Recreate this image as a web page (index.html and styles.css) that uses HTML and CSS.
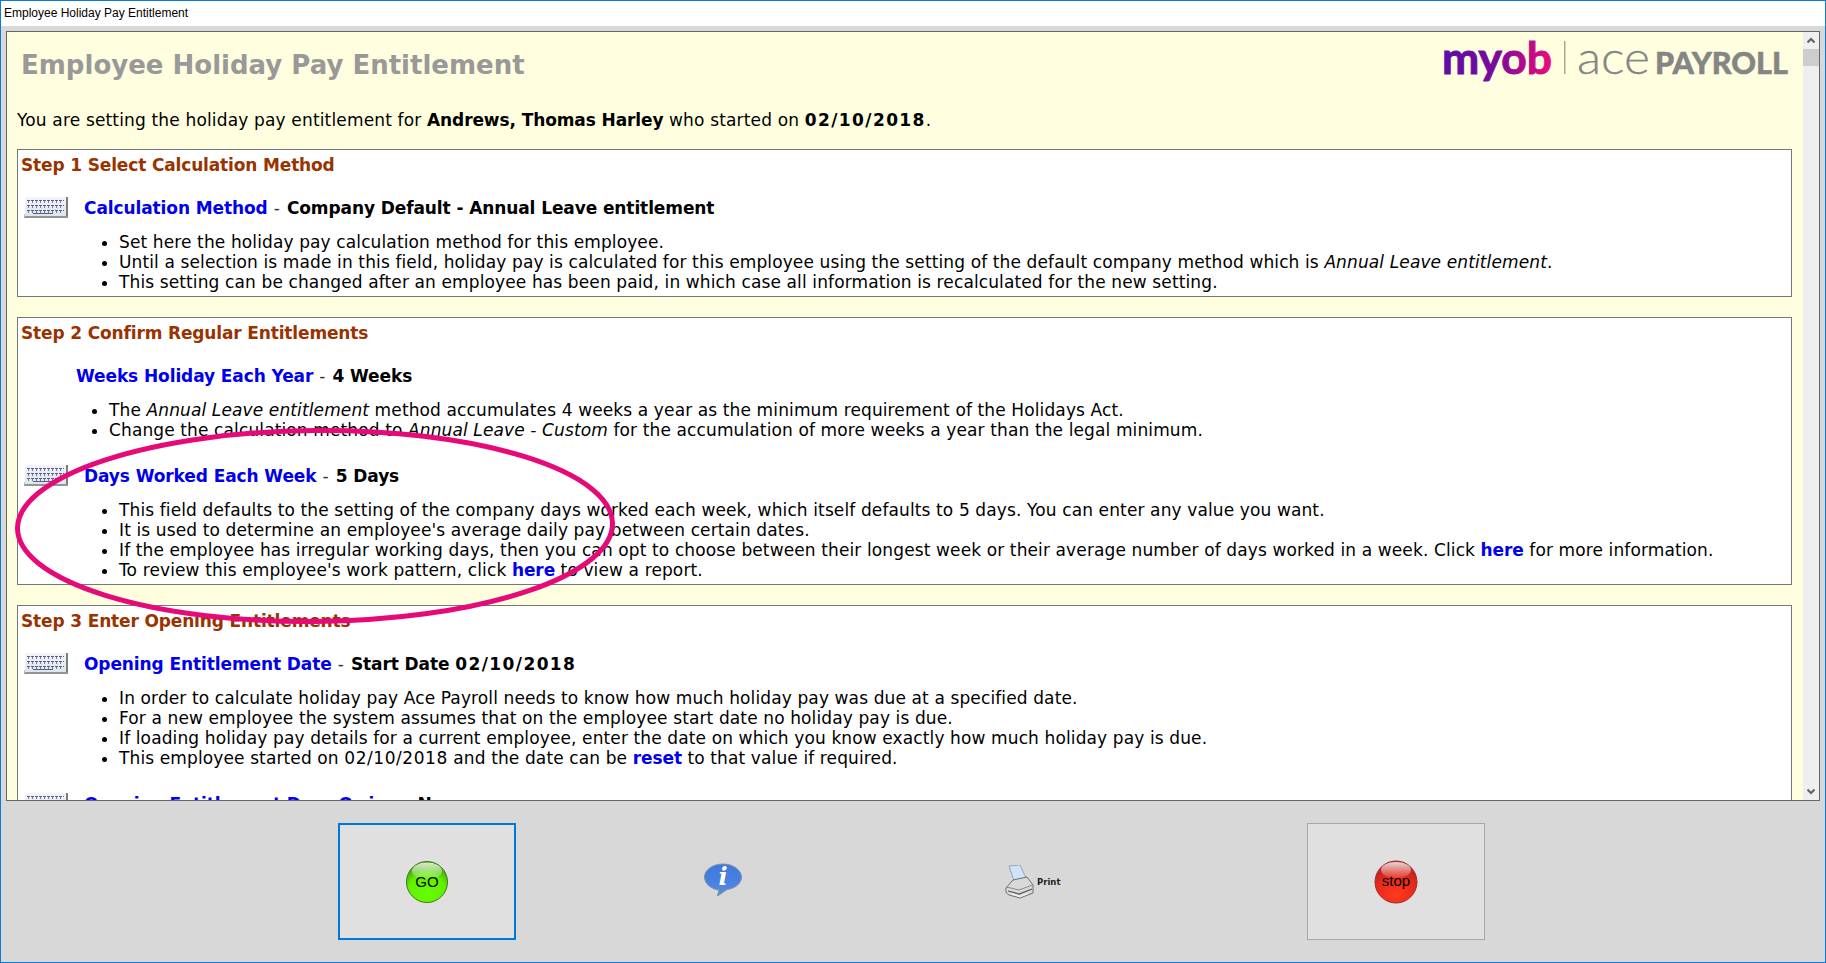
FILE: index.html
```html
<!DOCTYPE html>
<html lang="en">
<head>
<meta charset="utf-8">
<title>Employee Holiday Pay Entitlement</title>
<link rel="stylesheet" href="styles.css">
</head>
<body>
<svg class="defs" width="0" height="0" aria-hidden="true">
  <defs>
    <pattern id="keys" x="3" y="3" width="4" height="5" patternUnits="userSpaceOnUse">
      <rect x="0" y="0" width="3" height="1" fill="#5c5c84"/>
      <rect x="1" y="1" width="1" height="2" fill="#7878a0"/>
    </pattern>
    <linearGradient id="kbody" x1="0" x2="0" y1="0" y2="1">
      <stop offset="0" stop-color="#f4f4fa"/>
      <stop offset="1" stop-color="#d8e6ea"/>
    </linearGradient>
    <g id="kbd">
      <rect x="1" y="0" width="41" height="20" fill="url(#kbody)"/>
      <rect x="3" y="3" width="37" height="15" fill="url(#keys)"/>
      <rect x="9" y="16" width="20" height="1" fill="#5c5c84"/>
      <rect x="42" y="0" width="2" height="21" fill="#7d7d7d"/>
      <rect x="0" y="19" width="44" height="2" fill="#949494"/>
      <rect x="0" y="17" width="1" height="3" fill="#c0c0c0"/>
    </g>
  </defs>
</svg>
<div class="window">
  <header class="titlebar">Employee Holiday Pay Entitlement</header>
  <div class="frame">
    <main class="content">
      <div class="masthead">
        <h1 class="title">Employee Holiday Pay Entitlement</h1>
        <svg class="logo" width="349" height="60" viewBox="0 0 349 60" role="img" aria-label="myob ace PAYROLL">
          <defs>
            <linearGradient id="myobgrad" x1="0" x2="1" y1="0" y2="0">
              <stop offset="0" stop-color="#5a0ea8"/>
              <stop offset=".5" stop-color="#7a0a9a"/>
              <stop offset="1" stop-color="#ec0a7c"/>
            </linearGradient>
          </defs>
          <text x="-1" y="42" class="logo-myob" fill="url(#myobgrad)" stroke="url(#myobgrad)" textLength="110" lengthAdjust="spacingAndGlyphs">myob</text>
          <rect x="121" y="9" width="1.5" height="33" fill="#a9a98f"/>
          <text x="134" y="42" class="logo-ace" textLength="73" lengthAdjust="spacingAndGlyphs">ace</text>
          <text x="212" y="42" class="logo-payroll" textLength="133" lengthAdjust="spacingAndGlyphs">PAYROLL</text>
        </svg>
      </div>
      <p class="intro">You are setting the holiday pay entitlement for <b>Andrews, Thomas Harley</b> who started on <b class="num-bold">02/10/2018</b>.</p>

      <section class="card">
        <h2 class="step">Step 1 Select Calculation Method</h2>
        <div class="field">
          <svg class="kbd" width="44" height="22" viewBox="0 0 44 22"><use href="#kbd"/></svg>
          <span class="label">Calculation Method</span> <span class="dash">-</span> <b>Company Default - Annual Leave entitlement</b>
        </div>
        <ul class="notes">
          <li>Set here the holiday pay calculation method for this employee.</li>
          <li>Until a selection is made in this field, holiday pay is calculated for this employee using the setting of the default company method which is <i>Annual Leave entitlement</i>.</li>
          <li>This setting can be changed after an employee has been paid, in which case all information is recalculated for the new setting.</li>
        </ul>
      </section>

      <section class="card">
        <h2 class="step">Step 2 Confirm Regular Entitlements</h2>
        <div class="field field-plain">
          <span class="label">Weeks Holiday Each Year</span> <span class="dash">-</span> <b>4 Weeks</b>
        </div>
        <ul class="notes notes-plain">
          <li>The <i>Annual Leave entitlement</i> method accumulates 4 weeks a year as the minimum requirement of the Holidays Act.</li>
          <li>Change the calculation method to <i>Annual Leave - Custom</i> for the accumulation of more weeks a year than the legal minimum.</li>
        </ul>
        <div class="field">
          <svg class="kbd" width="44" height="22" viewBox="0 0 44 22"><use href="#kbd"/></svg>
          <span class="label">Days Worked Each Week</span> <span class="dash">-</span> <b>5 Days</b>
        </div>
        <ul class="notes">
          <li>This field defaults to the setting of the company days worked each week, which itself defaults to 5 days. You can enter any value you want.</li>
          <li>It is used to determine an employee's average daily pay between certain dates.</li>
          <li>If the employee has irregular working days, then you can opt to choose between their longest week or their average number of days worked in a week. Click <a class="link">here</a> for more information.</li>
          <li>To review this employee's work pattern, click <a class="link">here</a> to view a report.</li>
        </ul>
      </section>

      <section class="card">
        <h2 class="step">Step 3 Enter Opening Entitlements</h2>
        <div class="field">
          <svg class="kbd" width="44" height="22" viewBox="0 0 44 22"><use href="#kbd"/></svg>
          <span class="label">Opening Entitlement Date</span> <span class="dash">-</span> <b>Start Date <span class="num-bold">02/10/2018</span></b>
        </div>
        <ul class="notes">
          <li>In order to calculate holiday pay Ace Payroll needs to know how much holiday pay was due at a specified date.</li>
          <li>For a new employee the system assumes that on the employee start date no holiday pay is due.</li>
          <li>If loading holiday pay details for a current employee, enter the date on which you know exactly how much holiday pay is due.</li>
          <li>This employee started on <span class="num">02/10/2018</span> and the date can be <a class="link">reset</a> to that value if required.</li>
        </ul>
        <div class="field">
          <svg class="kbd" width="44" height="22" viewBox="0 0 44 22"><use href="#kbd"/></svg>
          <span class="label">Opening Entitlement Days Owing</span> <span class="dash">-</span> <b>None</b>
        </div>
      </section>
    </main>
    <aside class="scrollbar">
      <svg class="chev" width="16" height="17" viewBox="0 0 16 17"><path d="M4.500 10.500 8 7l3.500 3.500" fill="none" stroke="#606060" stroke-width="2"/></svg>
      <div class="thumb"></div>
      <div class="track"></div>
      <svg class="chev" width="16" height="17" viewBox="0 0 16 17"><path d="M4.500 6.500 8 10l3.500-3.500" fill="none" stroke="#606060" stroke-width="2"/></svg>
    </aside>
  </div>
  <footer class="actions">
    <button class="btn btn-go">
      <svg width="44" height="44" viewBox="0 0 44 44">
        <defs>
          <radialGradient id="goball" cx=".5" cy=".8" r=".8">
            <stop offset="0" stop-color="#66ff00"/><stop offset=".6" stop-color="#62ee00"/><stop offset="1" stop-color="#3f8f10"/>
          </radialGradient>
          <linearGradient id="shine" x1="0" x2="0" y1="0" y2="1">
            <stop offset="0" stop-color="#fff" stop-opacity=".8"/><stop offset="1" stop-color="#fff" stop-opacity=".08"/>
          </linearGradient>
        </defs>
        <circle cx="22" cy="22" r="20.500" fill="url(#goball)" stroke="#3e7d1a" stroke-width="1"/>
        <ellipse cx="22" cy="11" rx="15" ry="8.500" fill="url(#shine)"/>
        <text x="22" y="27" class="ball-text">GO</text>
      </svg>
    </button>
    <button class="btn-bare btn-info" aria-label="Information">
      <svg width="40" height="34" viewBox="0 0 40 34">
        <defs>
          <linearGradient id="bub" x1="0" x2="0" y1="0" y2="1">
            <stop offset="0" stop-color="#3f78dc"/><stop offset=".6" stop-color="#4a82e2"/><stop offset="1" stop-color="#5f8fd0"/>
          </linearGradient>
        </defs>
        <path d="M20 1C9.500 1 1.500 7 1.500 14S9 26.500 16 27l-1.500 6L24 26.500C32 25.500 38.500 20.500 38.500 14S30.500 1 20 1Z" fill="url(#bub)" stroke="#7c8fb0" stroke-width="1"/>
        <text x="20" y="22" class="info-i">i</text>
      </svg>
    </button>
    <button class="btn-bare btn-print">
      <svg width="29" height="34" viewBox="0 0 29 34">
        <path d="M4 1 15 0l6 13-12 3Z" fill="#cfe3fa" stroke="#8a96a6" stroke-width=".8"/>
        <path d="M1 23 8 15l14-3 6 8v8l-13 5-11-3Q0 28 1 23Z" fill="#d9d9d9" stroke="#6e6e6e" stroke-width="1"/>
        <path d="M1.500 22 14 25l13.500-5" fill="none" stroke="#8a8a8a" stroke-width="1"/>
        <path d="M3 26l11 3 13-5" fill="none" stroke="#555" stroke-width="1.200"/>
        <path d="M6 29l9 2.500 8-3" fill="none" stroke="#f4f4f4" stroke-width="1.200"/>
      </svg>
      <span class="print-label">Print</span>
    </button>
    <button class="btn btn-stop">
      <svg width="44" height="44" viewBox="0 0 44 44">
        <defs>
          <radialGradient id="stopball" cx=".5" cy=".8" r=".8">
            <stop offset="0" stop-color="#ff3a20"/><stop offset=".6" stop-color="#e8281a"/><stop offset="1" stop-color="#a82222"/>
          </radialGradient>
        </defs>
        <circle cx="22" cy="22" r="21" fill="url(#stopball)" stroke="#9a3030" stroke-width="1"/>
        <ellipse cx="22" cy="10" rx="15" ry="8" fill="url(#shine)"/>
        <text x="22" y="26" class="ball-text">stop</text>
      </svg>
    </button>
  </footer>
  <svg class="circle" width="640" height="230" viewBox="0 0 640 230" aria-hidden="true">
    <ellipse cx="314" cy="111" rx="297.500" ry="95.500" transform="rotate(-0.500 314 111)" fill="none" stroke="#e60a78" stroke-width="5"/>
  </svg>
</div>
</body>
</html>
```

FILE: styles.css
```css
* { box-sizing: border-box; }
html, body { margin: 0; padding: 0; height: 100%; overflow: hidden; }
body { font-family: "DejaVu Sans", Verdana, sans-serif; font-size: 17px; letter-spacing: .12px; color: #000; }
b, .label, .link { letter-spacing: -.1px; }
.num-bold { letter-spacing: 1.4px; }
.num { letter-spacing: .55px; }
.defs { position: absolute; }
.window {
  position: relative;
  width: 1826px; height: 963px;
  display: flex; flex-direction: column;
  background: #d8d8d8;
  border: 1px solid #0a7ad6;
}
.titlebar {
  height: 25px; flex: none;
  background: #fff;
  font-family: "Liberation Sans", Arial, sans-serif;
  font-size: 12px; line-height: 25px; letter-spacing: 0;
  padding-left: 3px;
}
.frame {
  flex: none;
  height: 770px;
  margin: 5px 5px 0 5px;
  border: 1px solid #666;
  background: #ffffdf;
  display: flex;
  overflow: hidden;
}
.content { flex: 1; min-width: 0; overflow: hidden; padding: 0 11px 0 10px; }
.masthead { display: flex; justify-content: space-between; align-items: flex-start; height: 78px; }
.title {
  margin: 16px 0 0 4px;
  font-size: 26px; line-height: 34px; font-weight: bold; color: #999; letter-spacing: 0;
}
.logo { flex: none; }
.logo-myob { font-family: Lato, sans-serif; font-weight: 700; font-size: 44px; stroke-width: 1; letter-spacing: 0; }
.logo-ace { font-family: Lato, sans-serif; font-weight: 300; font-size: 46px; fill: #858585; stroke: #858585; stroke-width: .3; letter-spacing: 0; }
.logo-payroll { font-family: Lato, sans-serif; font-weight: 900; font-size: 30px; fill: #858585; stroke: #858585; stroke-width: .5; letter-spacing: 0; }
.intro { margin: 0 0 19px; line-height: 20px; height: 20px; letter-spacing: .16px; white-space: nowrap; }
.intro b { letter-spacing: -.1px; }
.intro .num-bold { letter-spacing: 1.4px; }
.card {
  background: #fff;
  border: 1px solid #777;
  padding: 5px 2px 4px 2px;
  margin-bottom: 20px;
}
.step { margin: 0; padding-left: 1px; font-size: 17px; line-height: 20px; font-weight: bold; color: #993300; letter-spacing: -.15px; }
.field { height: 20px; margin-top: 23px; line-height: 20px; display: flex; gap: 6px; align-items: center; padding-left: 4px; white-space: pre; }
.field-plain { padding-left: 56px; }
.kbd { flex: none; margin: -1px 10px -1px 0; }
.label { font-weight: bold; color: #0000ee; }
.dash { color: #333; margin-right: 1px; }
.notes { margin: 14px 0 0; padding: 0 0 0 99px; line-height: 20px; }
.notes-plain { padding-left: 89px; }
.notes + .field { margin-top: 26px; }
.link { font-weight: bold; color: #0000ee; }
.scrollbar { flex: none; width: 16px; background: #efefef; display: flex; flex-direction: column; }
.chev { flex: none; display: block; }
.thumb { flex: none; height: 17px; background: #cdcdcd; }
.track { flex: 1; }
.actions { flex: 1; position: relative; display: flex; align-items: center; }
.btn {
  flex: none; width: 178px; height: 117px;
  background: #e0e0e0;
  display: flex; align-items: center; justify-content: center;
  padding: 0;
}
.btn-go { margin-left: 337px; border: 2px solid #0078d7; }
.btn-stop { margin-left: 247px; border: 1px solid #a8a8a8; }
.btn-bare { flex: none; border: 0; background: transparent; padding: 0; display: flex; align-items: center; }
.btn-info { margin-left: 187px; margin-bottom: 3px; }
.btn-print { margin-left: 262px; gap: 3px; }
.print-label { font-family: "DejaVu Sans", sans-serif; font-size: 8.5px; font-weight: bold; color: #222; letter-spacing: 0; }
.ball-text { font-family: "Liberation Sans", Arial, sans-serif; font-size: 15px; text-anchor: middle; fill: #000; letter-spacing: 0; }
.info-i { font-family: "DejaVu Serif", serif; font-weight: bold; font-style: italic; font-size: 24px; text-anchor: middle; fill: #fff; }
.circle { position: absolute; left: 0; top: 414px; pointer-events: none; }
```
